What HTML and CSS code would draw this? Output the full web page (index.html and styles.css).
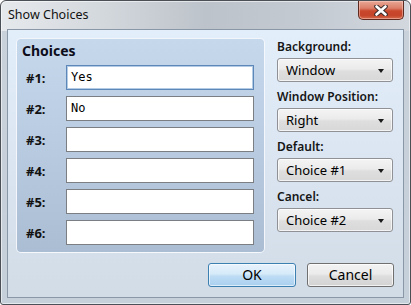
FILE: index.html
```html
<!DOCTYPE html>
<html>
<head>
<meta charset="utf-8">
<link rel="stylesheet" href="styles.css">
</head>
<body>
<div class="window">
  <div class="titlebar">
    <span class="title">Show Choices</span>
    <div class="close">
      <svg width="14" height="11" viewBox="0 0 14 11">
        <path d="M2.5 1.5 L11.5 9.5 M11.5 1.5 L2.5 9.5" stroke="#3b2a2a" stroke-width="4.6" stroke-linecap="round"/>
        <path d="M2.5 1.5 L11.5 9.5 M11.5 1.5 L2.5 9.5" stroke="#ffffff" stroke-width="2.6" stroke-linecap="round"/>
      </svg>
    </div>
  </div>
  <div class="client">
    <div class="main">
      <div class="group">
        <div class="group-title">Choices</div>
        <div class="rows">
          <div class="row"><span class="num">#1:</span><div class="field focused">Yes</div></div>
          <div class="row"><span class="num">#2:</span><div class="field">No</div></div>
          <div class="row"><span class="num">#3:</span><div class="field"></div></div>
          <div class="row"><span class="num">#4:</span><div class="field"></div></div>
          <div class="row"><span class="num">#5:</span><div class="field"></div></div>
          <div class="row"><span class="num">#6:</span><div class="field"></div></div>
        </div>
      </div>
      <div class="side">
        <div class="opt">
          <div class="opt-label">Background:</div>
          <div class="select"><span>Window</span><span class="arrow"></span></div>
        </div>
        <div class="opt">
          <div class="opt-label">Window Position:</div>
          <div class="select"><span>Right</span><span class="arrow"></span></div>
        </div>
        <div class="opt">
          <div class="opt-label">Default:</div>
          <div class="select"><span>Choice #1</span><span class="arrow"></span></div>
        </div>
        <div class="opt">
          <div class="opt-label">Cancel:</div>
          <div class="select"><span>Choice #2</span><span class="arrow"></span></div>
        </div>
      </div>
    </div>
    <div class="buttons">
      <div class="btn btn-default">OK</div>
      <div class="btn btn-cancel">Cancel</div>
    </div>
  </div>
</div>
</body>
</html>
```

FILE: styles.css
```css
* { box-sizing: border-box; }
html, body { margin: 0; padding: 0; }
body {
  width: 411px;
  height: 305px;
  overflow: hidden;
  font-family: "Noto Sans", "Open Sans", sans-serif;
  color: #000;
  background: #ffffff;
}
.window {
  width: 411px;
  height: 305px;
  border: 1px solid #4b5056;
  border-radius: 6px 6px 3px 3px;
  padding: 0 6px 6px 6px;
  display: flex;
  flex-direction: column;
  background:
    linear-gradient(to right, #e6e9ec 0%, #d3d8dd 25%, #bdc3ca 50%, #c4cad1 75%, #d2d8de 100%) top left / 100% 30px no-repeat,
    linear-gradient(to bottom, #c9d1da, #c6d0da);
  box-shadow: inset 0 0 0 1px rgba(255,255,255,0.55);
}
.titlebar {
  height: 28px;
  display: flex;
  justify-content: space-between;
  align-items: flex-start;
}
.title {
  margin-top: 5px;
  padding-left: 1px;
  line-height: 18px;
  font-size: 12.5px;
  color: #111;
}
.close {
  width: 46px;
  height: 19px;
  border: 1px solid #5e2a20;
  border-top: none;
  border-radius: 0 0 5px 5px;
  background: linear-gradient(to bottom, #e9a896 0%, #dc7e68 40%, #c9482c 55%, #c5452a 80%, #d66a4c 100%);
  box-shadow: inset 0 0 0 1px rgba(255,220,210,0.45);
  display: flex;
  align-items: center;
  justify-content: center;
}
.client {
  flex: 1;
  border: 1px solid #8a97a6;
  background: linear-gradient(to bottom, #e3eefb 0%, #dae5f1 50%, #d2dce7 100%);
  padding: 8px 9px 9px 8px;
  display: flex;
  flex-direction: column;
}
.main {
  display: flex;
  gap: 12px;
  align-items: flex-start;
}
.group {
  width: 249px;
  border: 1px solid rgba(250,252,255,0.9);
  border-radius: 5px;
  background: linear-gradient(to bottom, #c6d8ec 0%, #b9cbe0 50%, #abbdd3 100%);
  padding: 3px 10px 7px 9px;
}
.group-title {
  font-size: 14px;
  font-weight: 700;
  line-height: 18px;
  padding-left: -3px;
  margin-left: -4px;
  color: #0d0d1a;
}
.rows {
  margin-top: 5px;
  display: flex;
  flex-direction: column;
  gap: 6px;
}
.row {
  display: grid;
  grid-template-columns: 40px 188px;
  align-items: center;
}
.num {
  font-size: 13px;
  font-weight: 700;
  color: #111;
  line-height: 16px;
}
.field {
  height: 25px;
  background: #ffffff;
  border: 1px solid #7b7f84;
  font-family: "DejaVu Sans Mono", "Liberation Mono", monospace;
  font-size: 12px;
  line-height: 23px;
  padding-left: 4px;
}
.field.focused {
  border-color: #5d87b8;
  box-shadow: inset 0 0 0 1px #b4cbe6;
}
.side {
  width: 116px;
  display: flex;
  flex-direction: column;
  gap: 6px;
}
.opt {
  display: flex;
  flex-direction: column;
  gap: 2px;
}
.opt-label {
  font-size: 12px;
  font-weight: 600;
  line-height: 18px;
  color: #151515;
}
.select {
  height: 24px;
  border: 1px solid #8f9194;
  border-radius: 3px;
  background: linear-gradient(to bottom, #f4f4f4 0%, #ebebeb 45%, #dedede 55%, #d8d8d8 100%);
  box-shadow: inset 0 0 0 1px rgba(255,255,255,0.7);
  display: flex;
  align-items: center;
  justify-content: space-between;
  padding: 0 8px 0 8px;
  font-size: 13px;
  line-height: 22px;
}
.arrow {
  width: 0;
  height: 0;
  border-left: 3.5px solid transparent;
  border-right: 3.5px solid transparent;
  border-top: 4px solid #1a1a1a;
  margin-top: 1px;
}
.buttons {
  margin-top: 10px;
  display: flex;
  justify-content: flex-end;
  gap: 11px;
}
.btn {
  height: 24px;
  border-radius: 3px;
  font-size: 14px;
  line-height: 22px;
  text-align: center;
}
.btn-default {
  width: 88px;
  border: 1px solid #3c7fb1;
  background: linear-gradient(to bottom, #e8f3fc 0%, #d6eaf9 45%, #bedcf4 55%, #a9d0f0 100%);
  box-shadow: inset 0 0 0 1px rgba(255,255,255,0.6);
}
.btn-cancel {
  width: 87px;
  border: 1px solid #707070;
  background: linear-gradient(to bottom, #f3f3f3 0%, #ebebeb 45%, #dddddd 55%, #d3d3d3 100%);
  box-shadow: inset 0 0 0 1px rgba(255,255,255,0.7);
}
```
